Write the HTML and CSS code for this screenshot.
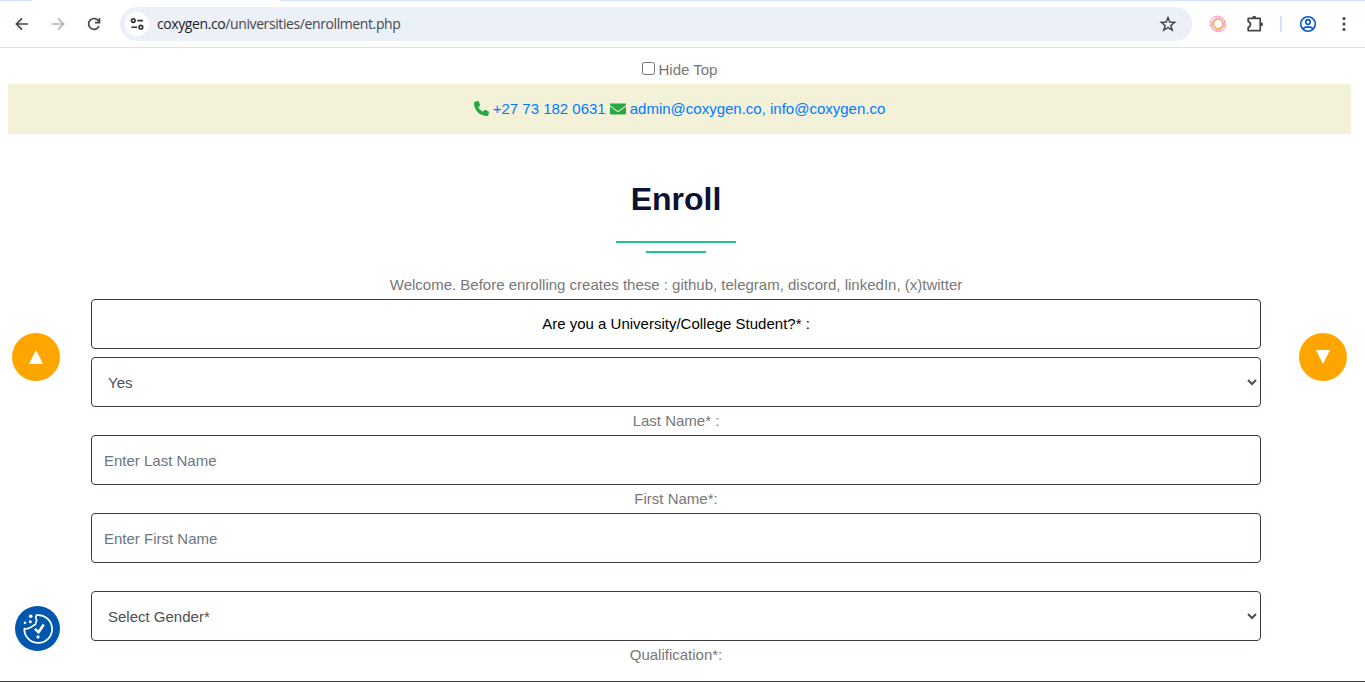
FILE: index.html
```
<!DOCTYPE html>
<html lang="en">
<head>
<meta charset="utf-8">
<title>Enroll</title>
<link rel="stylesheet" href="styles.css">
</head>
<body>
<div class="window">
  <header class="toolbar">
    <span class="tab-gap"></span>
    <nav class="nav">
      <svg width="16" height="16" viewBox="0 0 16 16" fill="none" stroke="#474747" stroke-width="1.7"><path d="M14 8H3M8 2.4L2.4 8L8 13.6"/></svg>
      <svg width="16" height="16" viewBox="0 0 16 16" fill="none" stroke="#b3b3b3" stroke-width="1.6"><path d="M2 8h11M8 2.4L13.6 8L8 13.6"/></svg>
      <svg width="16" height="16" viewBox="0 0 16 16" fill="none" stroke="#474747" stroke-width="1.7"><path d="M13 10A5.4 5.4 0 1 1 12.5 4.9L13.4 6M13.5 2v4.6H9"/></svg>
    </nav>
    <div class="omnibox">
      <span class="site-info">
        <svg width="14" height="14" viewBox="0 0 14 14" fill="none" stroke="#303030" stroke-width="1.6"><circle cx="3.3" cy="3.6" r="1.8"/><path d="M7.4 3.6H13M1.4 10.2H7"/><circle cx="10.9" cy="10.2" r="1.8"/></svg>
      </span>
      <span class="url"><span class="host">coxygen.co</span>/universities/enrollment.php</span>
      <svg class="star" width="18" height="18" viewBox="0 0 18 18" fill="none" stroke="#474747" stroke-width="1.5"><path d="M9 2.6L10.8 7.1L15.7 7.4L11.9 10.5L13.2 15.2L9 12.6L4.8 15.2L6.1 10.5L2.3 7.4L7.2 7.1Z"/></svg>
    </div>
    <div class="tools">
      <svg width="18" height="18" viewBox="0 0 18 18" fill="none"><circle cx="8.400" cy="8.400" r="7.300" stroke="#f99bcb"/><circle cx="9.700" cy="9.600" r="7.200" stroke="#f99bbd" stroke-width=".9"/><circle cx="9" cy="9" r="5.500" stroke="#f9b08c" stroke-width=".7"/><circle cx="9.200" cy="8.900" r="4.800" stroke="#fba040" stroke-width="1.200"/></svg>
      <svg class="puzzle" width="18" height="18" viewBox="0 0 18 18" fill="none" stroke="#474747" stroke-width="1.7" stroke-linejoin="round"><path d="M2.200 3.400H14.200V15.600H2.200V12.400C5.200 11.700 5.200 7.400 2.200 6.700Z"/><path fill="#474747" stroke="none" d="M6.100 3.100a2.100 2.400 0 0 1 4.200 0zM14.800 7.200a2.300 2.100 0 0 1 0 4.200z"/></svg>
      <span class="divider"></span>
      <svg class="profile" width="18" height="18" viewBox="0 0 18 18" fill="none" stroke="#0b57d0" stroke-width="1.6"><circle cx="9" cy="9" r="7.3"/><circle cx="9" cy="6.9" r="2.3"/><path d="M3.8 13.8C6.4 11.2 11.6 11.2 14.2 13.8"/></svg>
      <svg class="dots" width="4" height="16" viewBox="0 0 4 16" fill="#474747"><circle cx="2" cy="2.5" r="1.6"/><circle cx="2" cy="8" r="1.6"/><circle cx="2" cy="13.5" r="1.6"/></svg>
    </div>
  </header>

  <main class="page">
    <label class="hide-top"><input type="checkbox" class="check">Hide Top</label>
    <div class="contact">
      <svg class="handset" width="15" height="15" viewBox="0 0 512 512" fill="#28a745"><path d="M164.900 24.600c-7.700-18.600-28-28.500-47.400-23.200l-88 24C12.100 30.200 0 46 0 64c0 247.400 200.600 448 448 448 18 0 33.800-12.100 38.600-29.500l24-88c5.300-19.400-4.600-39.700-23.200-47.400l-96-40c-16.300-6.800-35.200-2.100-46.300 11.600L304.700 368C234.300 334.700 177.300 277.700 144 207.300l49.300-40.300c13.700-11.200 18.400-30 11.600-46.300z"/></svg>
      <a class="phone">+27 73 182 0631</a>
      <svg class="mail" width="16" height="12" viewBox="0 0 16 12" fill="#28a745"><path d="M1.500.4h13A1.300 1.300 0 0 1 16 1.700v.5L9 7.400a1.800 1.800 0 0 1-2 0L0 2.200v-.5A1.300 1.300 0 0 1 1.500.4zM0 3.500l6.400 4.700a2.700 2.700 0 0 0 3.200 0L16 3.500v6.600a1.500 1.500 0 0 1-1.500 1.500h-13A1.500 1.500 0 0 1 0 10.100z"/></svg>
      <a>admin@coxygen.co, info@coxygen.co</a>
    </div>

    <section class="enroll">
      <h1 class="title">Enroll</h1>
      <div class="rule rule-long"></div>
      <div class="rule rule-short"></div>
      <p class="text intro">Welcome. Before enrolling creates these : github, telegram, discord, linkedIn, (x)twitter</p>
      <div class="field question">Are you a University/College Student?* :</div>
      <select class="field select"><option>Yes</option></select>
      <p class="text">Last Name* :</p>
      <input class="field" type="text" placeholder="Enter Last Name">
      <p class="text">First Name*:</p>
      <input class="field" type="text" placeholder="Enter First Name">
      <select class="field select gender"><option>Select Gender*</option></select>
      <p class="text">Qualification*:</p>
    </section>
  </main>

  <button class="scroll up" aria-label="Scroll up"><svg width="14" height="14" viewBox="0 0 14 14" fill="#fff"><path d="M7 0L14 14H0Z"/></svg></button>
  <button class="scroll down" aria-label="Scroll down"><svg width="14" height="14" viewBox="0 0 14 14" fill="#fff"><path d="M0 0H14L7 14Z"/></svg></button>
  <button class="cookie" aria-label="Cookie settings">
    <svg width="45" height="45" viewBox="0 0 45 45" fill="none" stroke="#fff" stroke-width="1.7"><path d="M21.500 9.200A13.900 13.900 0 1 1 9.300 22.700C11.500 23 13.500 22.700 14.800 21.600C17.200 21.600 17.800 19 20.300 18.700C21.300 17.300 20.300 15.800 21.800 14.300C20.500 12.500 20.500 11 21.500 9.200Z" stroke-linejoin="round"/><path d="M20 22.800L23.500 26.300L28.800 18.500" stroke-width="2.6"/><g fill="#fff" stroke="none"><circle cx="15.700" cy="10.200" r="1.800"/><circle cx="10" cy="16.700" r="1.300"/><circle cx="15.300" cy="15.700" r="1.500"/><path d="M21.600 29.600h2.800v2.800h-2.800z"/></g></svg>
  </button>
</div>
</body>
</html>
```
FILE: styles.css
```
* { box-sizing: border-box; }
body { margin: 0; background: #fff; font: 15px/24px "Liberation Sans", Arial, sans-serif; color: #777; }
.window { position: relative; height: 682px; overflow: hidden; border-bottom: 1px solid #3c3c3f; }
.toolbar { position: relative; display: flex; align-items: center; height: 48px; padding: 0 13px; border-top: 1px solid #d3e3fd; border-bottom: 1px solid #dedfe1; }
.tab-gap { position: absolute; top: -1px; left: 32px; width: 248px; height: 1px; background: #fff; }
.nav { display: flex; gap: 20px; width: 107px; padding-left: 1px; }
.nav svg { flex: none; }
.omnibox { display: flex; align-items: center; width: 1072px; height: 34px; padding: 0 15px 0 5px; border-radius: 17px; background: #ebf0f9; }
.site-info { display: flex; align-items: center; justify-content: center; width: 24px; height: 24px; border-radius: 50%; background: #fff; }
.url { margin-left: 8px; font: 14px/20px "Open Sans", "Noto Sans", sans-serif; letter-spacing: -.4px; color: #474747; white-space: nowrap; }
.host { color: #1f1f1f; }
.star { margin-left: auto; }
.tools { display: flex; align-items: center; margin-left: 17px; }
.puzzle { margin-left: 19px; }
.divider { width: 2px; height: 16px; margin-left: 16px; background: #d3e3fd; }
.profile { margin-left: 17px; }
.dots { margin-left: 25px; }
.page { padding: 9px 14px 0 8px; }
.hide-top { display: flex; align-items: center; justify-content: center; height: 27px; padding-bottom: 1px; }
.check { width: 13px; height: 13px; margin: 0 4px 3px 0; }
.contact { display: flex; align-items: center; justify-content: center; height: 50px; background: #f3f1d7; color: #007bff; }
.handset { margin-bottom: 2px; }
.phone { margin: 0 4px 0 4px; }
.mail { margin: 0 4px 1px 0; }
.enroll { display: flex; flex-direction: column; width: 1170px; margin: 0 0 0 83px; padding-top: 45px; text-align: center; }
.title { margin: 0; font-size: 32px; line-height: 40px; font-weight: 700; color: #0c1231; }
.rule { height: 2px; align-self: center; background: #1bc78a; }
.rule-long { width: 120px; margin-top: 22px; }
.rule-short { width: 60px; margin-top: 8px; }
.text { margin: 0; height: 28px; padding-top: 2px; }
.intro { margin-top: 18px; }
.field { width: 100%; height: 50px; padding: 6px 12px; border: 1px solid #453a40; border-radius: 4px; background: #fff; font: 15px/24px "Liberation Sans", Arial, sans-serif; color: #495057; outline: 0; }
.field::placeholder { color: #6c757d; opacity: 1; }
.question { padding-top: 12px; margin-bottom: 8px; color: #000; }
.gender { margin-top: 28px; }
.scroll { position: absolute; top: 333px; display: flex; align-items: center; justify-content: center; width: 48px; height: 48px; padding: 0; border: 0; border-radius: 50%; background: #ffa500; }
.up { left: 12px; }
.down { left: 1299px; }
.cookie { position: absolute; left: 15px; top: 606px; width: 45px; height: 45px; padding: 0; border: 0; border-radius: 50%; background: #0057ac; }
.cookie svg { display: block; }
```
